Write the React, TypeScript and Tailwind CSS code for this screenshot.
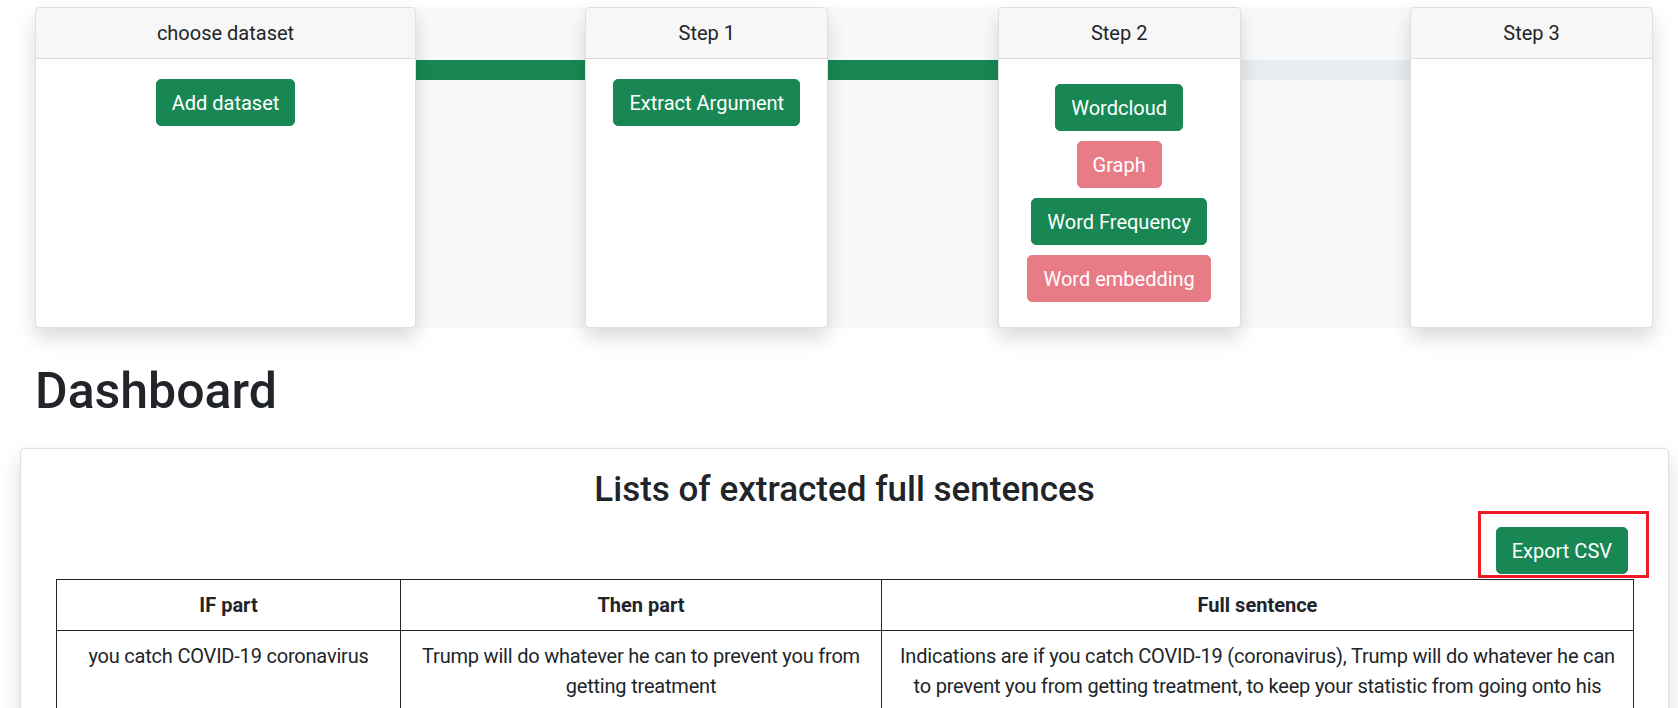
import React from 'react';

const btnGreen =
  'inline-block rounded-[5px] border border-[#198754] bg-[#198754] px-[15px] py-[7.5px] text-[20px] leading-[30px] text-white whitespace-nowrap';
const btnDisabled =
  'inline-block rounded-[5px] border border-[#e87c86] bg-[#e87c86] px-[15px] py-[7.5px] text-[20px] leading-[30px] text-white whitespace-nowrap';

const StepCard = ({
  title,
  width,
  children,
}: {
  title: string;
  width: string;
  children?: React.ReactNode;
}) => {
  return (
    <div
      className={`${width} flex flex-col rounded-[5px] border border-black/[0.125] bg-white shadow-[0_10px_20px_rgba(0,0,0,0.15)]`}
    >
      <div className="rounded-t-[5px] border-b border-black/[0.125] bg-[#f7f7f7] px-[20px] py-[10px] text-center text-[20px] leading-[30px]">
        {title}
      </div>
      <div className="flex flex-1 flex-col items-center p-[20px]">{children}</div>
    </div>
  );
};

export default function App() {
  return (
    <div className="min-h-screen bg-white font-['Roboto',sans-serif] text-[#212529]">
      {/* steps */}
      <div className="pl-[35px] pr-[25px] pt-[7px]">
        <div className="grid bg-[#f8f9fa]">
          <div className="col-start-1 row-start-1 mt-[53px] h-[20px] self-start overflow-hidden rounded-[5px] bg-[#e9ecef]">
            <div className="h-full w-[62%] bg-[#198754]" />
          </div>
          <div className="col-start-1 row-start-1 flex items-stretch justify-between">
            <StepCard title="choose dataset" width="w-[381px]">
              <button className={btnGreen}>Add dataset</button>
            </StepCard>
            <StepCard title="Step 1" width="w-[243px]">
              <button className={btnGreen}>Extract Argument</button>
            </StepCard>
            <StepCard title="Step 2" width="w-[243px]">
              <button className={`${btnGreen} m-[5px]`}>Wordcloud</button>
              <button className={`${btnDisabled} m-[5px]`}>Graph</button>
              <button className={`${btnGreen} m-[5px]`}>Word Frequency</button>
              <button className={`${btnDisabled} m-[5px]`}>Word embedding</button>
            </StepCard>
            <StepCard title="Step 3" width="w-[243px]" />
          </div>
        </div>
      </div>

      <h1 className="mt-[33px] pl-[35px] text-[50px] font-medium leading-[60px]">Dashboard</h1>

      <div className="ml-[20px] mr-[9px] mt-[27px] rounded-[5px] border border-black/[0.125] bg-white pt-[20px] shadow-[0_10px_20px_rgba(0,0,0,0.15)]">
        <h3 className="text-center text-[35px] font-medium leading-[42px]">
          Lists of extracted full sentences
        </h3>
        <div className="mt-[16px] flex justify-end pr-[40px]">
          <div className="relative">
            <button className={btnGreen}>Export CSV</button>
            <div className="pointer-events-none absolute -bottom-[4px] -left-[18px] -right-[21px] -top-[16px] border-[3px] border-[#ed1c24]" />
          </div>
        </div>
        <div className="mt-[5px] pb-[20px] pl-[35px] pr-[34px]">
          <table className="w-full border-collapse text-center text-[20px] leading-[30px]">
            <colgroup>
              <col className="w-[344px]" />
              <col className="w-[481px]" />
              <col />
            </colgroup>
            <thead>
              <tr>
                <th className="border border-[#212529] p-[10px] font-bold">IF part</th>
                <th className="border border-[#212529] p-[10px] font-bold">Then part</th>
                <th className="border border-[#212529] p-[10px] font-bold">Full sentence</th>
              </tr>
            </thead>
            <tbody className="tracking-[-0.2px]">
              <tr>
                <td className="border border-[#212529] p-[10px] align-top">you catch COVID-19 coronavirus</td>
                <td className="border border-[#212529] p-[10px] align-top">
                  Trump will do whatever he can to prevent you from getting treatment
                </td>
                <td className="border border-[#212529] p-[10px] align-top">
                  Indications are if you catch COVID-19 (coronavirus), Trump will do whatever he can to prevent you
                  from getting treatment, to keep your statistic from going onto his record.
                </td>
              </tr>
            </tbody>
          </table>
        </div>
      </div>
    </div>
  );
}
